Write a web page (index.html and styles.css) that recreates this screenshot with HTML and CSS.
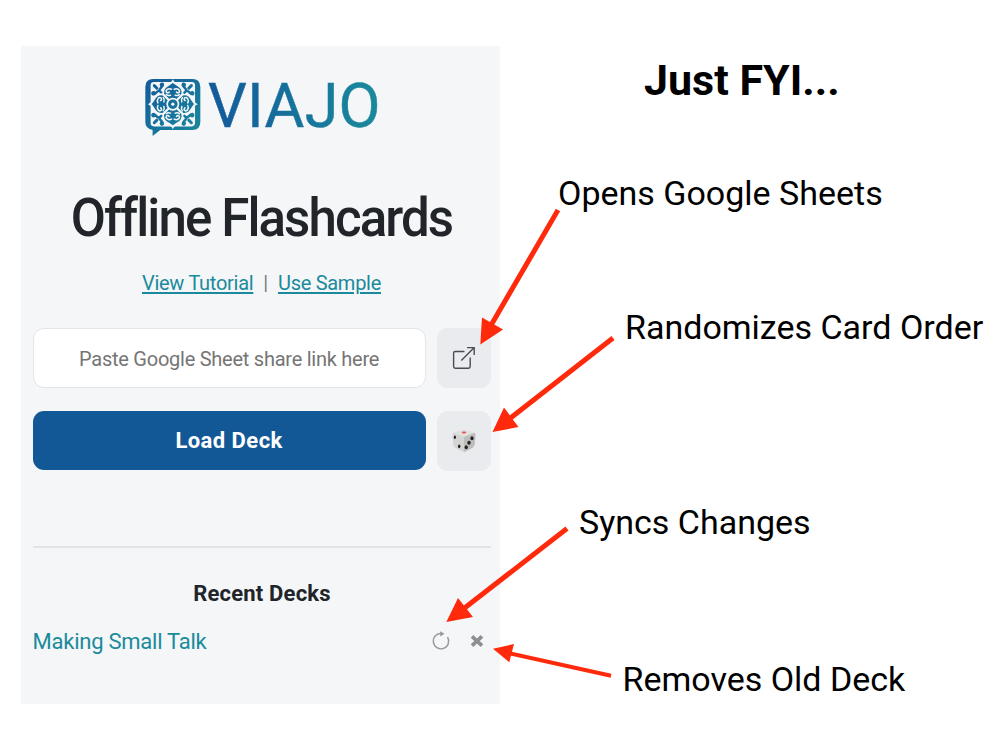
FILE: index.html
```html
<!DOCTYPE html>
<html lang="en">
<head>
<meta charset="utf-8">
<title>Viajo Offline Flashcards</title>
<link rel="stylesheet" href="styles.css">
</head>
<body>
<main class="panel">
  <div class="brand">
    <svg class="brand-mark" viewBox="15 25 169 176">
      <defs>
        <linearGradient id="mark" gradientUnits="userSpaceOnUse" x1="16" y1="27" x2="182" y2="199"><stop offset="0" stop-color="#13599b"/><stop offset="1" stop-color="#1a8a9c"/></linearGradient>
        <mask id="ornament" maskUnits="userSpaceOnUse" x="0" y="0" width="210" height="210">
          <rect width="210" height="210" fill="#fff"/>
          <rect x="32" y="36" width="134" height="134" rx="10" fill="#000"/>
          <g id="motif" fill="none" stroke-linecap="round">
            <path d="M99 34C92 47 65 46 70 74L99 103L128 74C133 46 106 47 99 34Z" fill="#fff" stroke="#000" stroke-width="6"/>
            <path d="M95 58C85 53 76 61 80 67C82 70 87 69 88 66M103 58C113 53 122 61 118 67C116 70 111 69 110 66M92 76C86 78 82 77 79 74M106 76C112 78 116 77 119 74" stroke="#000" stroke-width="4.500"/>
            <path d="M58 62L64 68M58 62C60 52 71 50 69 43C66 39 61 43 64 48M58 62C48 64 46 76 39 73C35 70 39 65 44 68" stroke="#fff" stroke-width="7.500"/>
            <path d="M43 47L51 55" stroke="#fff" stroke-width="9"/>
          </g>
          <use href="#motif" transform="rotate(90 99 103)"/>
          <use href="#motif" transform="rotate(180 99 103)"/>
          <use href="#motif" transform="rotate(270 99 103)"/>
          <circle cx="99" cy="103" r="17" fill="#fff" stroke="#000" stroke-width="5"/>
          <circle cx="99" cy="103" r="5" fill="#000"/>
        </mask>
      </defs>
      <path fill="url(#mark)" mask="url(#ornament)" d="M40 27H158Q182 27 182 51V157Q182 181 158 181H61L38 199V181Q16 178 16 157V51Q16 27 40 27Z"/>
    </svg>
    <span class="brand-name">VIAJO</span>
  </div>
  <h1 class="heading">Offline Flashcards</h1>
  <nav class="links"><a href="#">View Tutorial</a><span class="divider">|</span><a href="#">Use Sample</a></nav>
  <form class="loader">
    <input class="sheet-link" type="text" placeholder="Paste Google Sheet share link here">
    <button class="tool" type="button" aria-label="Open">
      <svg width="26" height="26" viewBox="0 0 26 26" fill="none" stroke="#4a4d52" stroke-width="1.4"><path d="M13.500 6.500H4.300Q2.600 6.500 2.600 8.200V21.500Q2.600 23.200 4.300 23.200H17.500Q19.200 23.200 19.200 21.500V12.500M10.300 15.500L23 2.800M16 2.600H23.200V10"/></svg>
    </button>
    <button class="load" type="button">Load Deck</button>
    <button class="tool" type="button" aria-label="Shuffle">
      <svg width="24" height="24" viewBox="0 0 24 24">
        <path fill="#e0e0de" d="M1.500 3.800L11 .8Q12 .5 13 .8L22.500 3.800L12 8Z"/>
        <path fill="#d4d4d2" d="M1.500 3.800L12 8V23Q11 23 10 22.200L3 18.500Q1.500 17 1.200 15L.5 6Q.4 4.500 1.500 3.800Z"/>
        <path fill="#bdbdbb" d="M12 8L22.500 3.800Q23.700 4.500 23.500 6L22.800 15Q22.500 17.500 21 18.500L14 22.200Q13 23 12 23Z"/>
        <ellipse cx="12" cy="3.500" rx="2.200" ry="1" fill="#e65353"/>
        <g fill="#222"><ellipse cx="2.900" cy="8.300" rx="1.100" ry="1.800"/><ellipse cx="7.200" cy="17.300" rx="1.200" ry="1.900"/><ellipse cx="20" cy="9.200" rx="1.600" ry="2"/><ellipse cx="17" cy="13.800" rx="1.700" ry="2"/><ellipse cx="14.200" cy="18.300" rx="1.600" ry="2"/></g>
      </svg>
    </button>
  </form>
  <section class="recent">
    <h2 class="recent-title">Recent Decks</h2>
    <div class="deck">
      <a class="deck-name" href="#">Making Small Talk</a>
      <svg class="sync" width="20" height="20" viewBox="0 0 20 20" fill="none" stroke="#999" stroke-width="1.4"><path d="M11 2.500A7.700 7.700 0 1 0 16.500 6"/><path d="M9 .2L13.500 2.800L9.300 5.400Z" fill="#999" stroke="none"/></svg>
      <svg class="remove" width="14" height="14" viewBox="0 0 14 14"><path d="M2 2.300L12 11.700M12 2.300L2 11.700" stroke="#8f8f8f" stroke-width="3.700"/></svg>
    </div>
  </section>
</main>
<aside class="notes">
  <h2 class="note-title">Just FYI...</h2>
  <p class="note opens">Opens Google Sheets</p>
  <p class="note order">Randomizes Card Order</p>
  <p class="note syncs">Syncs Changes</p>
  <p class="note removes">Removes Old Deck</p>
</aside>
<svg class="arrows" viewBox="0 0 1000 750" fill="#ff2a0c" stroke="#ff2a0c">
  <path d="M558 210L490 327M613 338L508 420M567 528.500L462 610" stroke-width="5"/>
  <path d="M611 675.700L508 653" stroke-width="4"/>
  <path stroke="none" d="M480.300 344.500L482 317.500L503 329.500ZM492.500 432L504 407.500L518.500 427ZM446.300 622L458 598L473 617ZM493 648.700L514 644L509.300 662.300Z"/>
</svg>
</body>
</html>
```
FILE: styles.css
```css
* { box-sizing: border-box; }
body { margin: 0; width: 1000px; height: 750px; position: relative; overflow: hidden; background: #fff; font-family: Roboto, "Liberation Sans", sans-serif; }
h1, h2, p { margin: 0; font-weight: inherit; }
.panel { width: 479.4px; height: 658px; margin: 46px 0 0 21px; padding: 32px 9px 0 11.6px; background: #f4f6f8; color: #212529; display: inline-block; }
.brand { display: flex; gap: 7px; height: 60px; padding-left: 112.4px; }
.brand-mark { width: 56px; height: 59px; flex: none; }
.brand-name { font-size: 61px; line-height: 56px; letter-spacing: 0.3px; background: linear-gradient(90deg, #13599b, #1a8a9c); -webkit-background-clip: text; background-clip: text; color: transparent; -webkit-text-stroke: 0.5px transparent; align-self: flex-start; }
.heading { margin-top: 46px; height: 66px; line-height: 67px; font-size: 54px; font-weight: 500; letter-spacing: -2px; text-indent: -2px; transform: scaleX(0.945); text-align: center; white-space: nowrap; }
.links { display: flex; justify-content: center; gap: 10px; margin-top: 20px; padding-right: 1px; font-size: 20px; line-height: 26px; letter-spacing: -0.28px; }
.links a { color: #1a8a9c; text-underline-offset: 2px; }
.divider { color: #777b82; }
.loader { display: grid; grid-template-columns: 393px 54px; column-gap: 11px; row-gap: 23px; margin-top: 32px; }
.sheet-link { height: 60px; border: 1.5px solid #e3e5ea; border-radius: 11px; background: #fff; text-align: center; font: 20px Roboto, sans-serif; letter-spacing: -0.25px; padding: 1px 0 0; }
.sheet-link::placeholder { color: #757575; }
.load { height: 59px; border: 0; border-radius: 11px; background: #135896; color: #fff; font: 700 22px Roboto, sans-serif; letter-spacing: 0.45px; }
.tool { height: 60px; border: 0; border-radius: 11px; background: #e9ebee; display: flex; align-items: center; justify-content: center; padding: 0; }
.recent { border-top: 2px solid #e1e4e7; margin-top: 75px; padding-top: 33px; }
.recent-title { font-size: 22px; line-height: 26px; font-weight: 700; letter-spacing: 0.2px; text-align: center; }
.deck { display: flex; align-items: center; margin-top: 20px; height: 28px; }
.deck-name { color: #1a8a9c; font-size: 22px; letter-spacing: -0.25px; text-decoration: none; margin-right: auto; }
.sync { margin-right: 19px; }
.remove { margin-right: 7px; }
.notes { color: #000; }
.note-title, .note { position: absolute; white-space: nowrap; }
.note-title { left: 644px; top: 55px; font-size: 43px; line-height: 50px; font-weight: 700; }
.note { font-size: 34px; line-height: 40px; }
.opens { left: 558px; top: 173px; }
.order { left: 625px; top: 307px; }
.syncs { left: 579px; top: 502px; }
.removes { left: 622.5px; top: 659px; }
.arrows { position: absolute; inset: 0; width: 1000px; height: 750px; pointer-events: none; }
```
